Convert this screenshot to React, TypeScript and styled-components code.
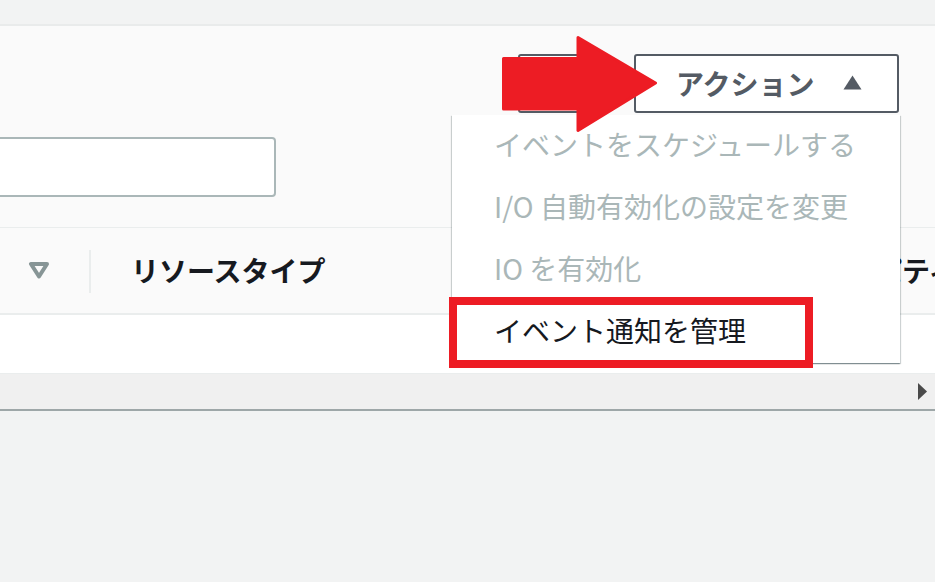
import React from "react";
import styled, { createGlobalStyle } from "styled-components";

const GlobalStyle = createGlobalStyle`
  html, body {
    margin: 0;
    padding: 0;
    background: #f2f3f3;
    font-family: "Noto Sans CJK JP", "Noto Sans", sans-serif;
    overflow: hidden;
  }
`;

const Page = styled.div`
  position: relative;
  width: 935px;
  height: 582px;
  overflow: hidden;
`;

const TopStrip = styled.div`
  height: 24px;
  background: #f2f3f3;
`;

const Panel = styled.div`
  background: #fafafa;
  border-top: 2px solid #e9ebeb;
  border-bottom: 1px solid #eaeded;
  padding: 28px 36px 30px 0;
  display: flex;
  flex-direction: column;
  gap: 24px;
`;

const ButtonRow = styled.div`
  display: flex;
  justify-content: flex-end;
  gap: 26px;
`;

const GhostButton = styled.button`
  width: 90px;
  height: 59px;
  border: 2px solid #545b64;
  border-radius: 3px;
  background: #ffffff;
`;

const ActionWrap = styled.div`
  position: relative;
`;

const ActionButton = styled.button`
  box-sizing: border-box;
  width: 265px;
  height: 59px;
  border: 2px solid #545b64;
  border-radius: 3px;
  background: #ffffff;
  color: #545b64;
  font-family: inherit;
  font-size: 28px;
  font-weight: 700;
  display: flex;
  align-items: center;
  justify-content: space-between;
  padding: 0 35px 2px 40px;
`;

const SearchInput = styled.div`
  box-sizing: border-box;
  margin-left: -20px;
  width: 296px;
  height: 60px;
  border: 2px solid #aab7b8;
  border-radius: 4px;
  background: #ffffff;
`;

const Menu = styled.ul`
  position: absolute;
  top: calc(100% + 2px);
  right: -1px;
  width: 448px;
  margin: 0;
  padding: 0;
  list-style: none;
  background: #ffffff;
  z-index: 5;
  box-shadow: 0 1px 1px 0 rgba(0, 28, 36, 0.3), 1px 1px 1px 0 rgba(0, 28, 36, 0.15),
    -1px 1px 1px 0 rgba(0, 28, 36, 0.15);
`;

const MenuItem = styled.li<{ $disabled?: boolean }>`
  height: 62px;
  box-sizing: border-box;
  display: flex;
  align-items: center;
  padding: 0 0 5px 42px;
  font-size: 28px;
  white-space: nowrap;
  color: ${(p) => (p.$disabled ? "#aab7b8" : "#16191f")};
`;

const HeaderRow = styled.div`
  display: flex;
  height: 85px;
  background: #fafafa;
  border-bottom: 2px solid #eaeded;
`;

const HeadCell = styled.div<{ $width?: number; $pad: number; $divider?: boolean }>`
  position: relative;
  box-sizing: border-box;
  flex: ${(p) => (p.$width ? `0 0 ${p.$width}px` : "1 0 auto")};
  display: flex;
  align-items: center;
  padding-left: ${(p) => p.$pad}px;
  padding-bottom: 2px;
  font-size: 28px;
  font-weight: 700;
  color: #16191f;
  white-space: nowrap;
  ${(p) =>
    p.$divider &&
    `&::after {
      content: "";
      position: absolute;
      right: 0;
      top: 22px;
      bottom: 20px;
      width: 2px;
      background: #eaeded;
    }`}
`;

const BodyRow = styled.div`
  height: 58px;
  background: #ffffff;
  border-bottom: 1px solid #eaeded;
`;

const ScrollBar = styled.div`
  height: 35px;
  background: #f0f0f0;
  border-bottom: 2px solid #9ea7a8;
  display: flex;
  align-items: center;
  justify-content: flex-end;
  padding-right: 8px;
`;

const Highlight = styled.div`
  position: absolute;
  left: 449px;
  top: 297px;
  width: 364px;
  height: 71px;
  box-sizing: border-box;
  border: 8px solid #ed1c24;
  z-index: 10;
`;

const Arrow = styled.svg`
  position: absolute;
  left: 498px;
  top: 32px;
  z-index: 11;
`;

const FilterIcon = () => (
  <svg width="22" height="18" viewBox="0 0 22 18">
    <path d="M3 3 H19 L11 15.5 Z" fill="none" stroke="#879596" strokeWidth="4" strokeLinejoin="round" />
  </svg>
);

const CaretUp = () => (
  <svg width="19" height="15" viewBox="0 0 19 15">
    <path d="M9.5 0.5 L18.5 14.5 H0.5 Z" fill="#545b64" />
  </svg>
);

const CaretRight = () => (
  <svg width="9" height="17" viewBox="0 0 9 17">
    <path d="M0 0 L9 8.5 L0 17 Z" fill="#4a4a4a" />
  </svg>
);

const items = [
  { label: "イベントをスケジュールする", disabled: true },
  { label: "I/O 自動有効化の設定を変更", disabled: true },
  { label: "IO を有効化", disabled: true },
  { label: "イベント通知を管理", disabled: false },
];

const App = () => {
  return (
    <>
      <GlobalStyle />
      <Page>
        <TopStrip />
        <Panel>
          <ButtonRow>
            <GhostButton />
            <ActionWrap>
              <ActionButton>
                アクション
                <CaretUp />
              </ActionButton>
              <Menu>
                {items.map((it) => (
                  <MenuItem key={it.label} $disabled={it.disabled}>
                    {it.label}
                  </MenuItem>
                ))}
              </Menu>
            </ActionWrap>
          </ButtonRow>
          <SearchInput />
        </Panel>
        <HeaderRow>
          <HeadCell $width={91} $pad={28} $divider>
            <FilterIcon />
          </HeadCell>
          <HeadCell $width={686} $pad={40} $divider>
            リソースタイプ
          </HeadCell>
          <HeadCell $pad={41}>プロパティ</HeadCell>
        </HeaderRow>
        <BodyRow />
        <ScrollBar>
          <CaretRight />
        </ScrollBar>
        <Highlight />
        <Arrow width="164" height="104" viewBox="498 32 164 104">
          <path
            d="M503.5 58.5 H578 V37.5 L655.5 83 L578 130.5 V109 H503.5 Z"
            fill="#ed1c24"
            stroke="#ed1c24"
            strokeWidth="3"
            strokeLinejoin="round"
          />
        </Arrow>
      </Page>
    </>
  );
};

export default App;
